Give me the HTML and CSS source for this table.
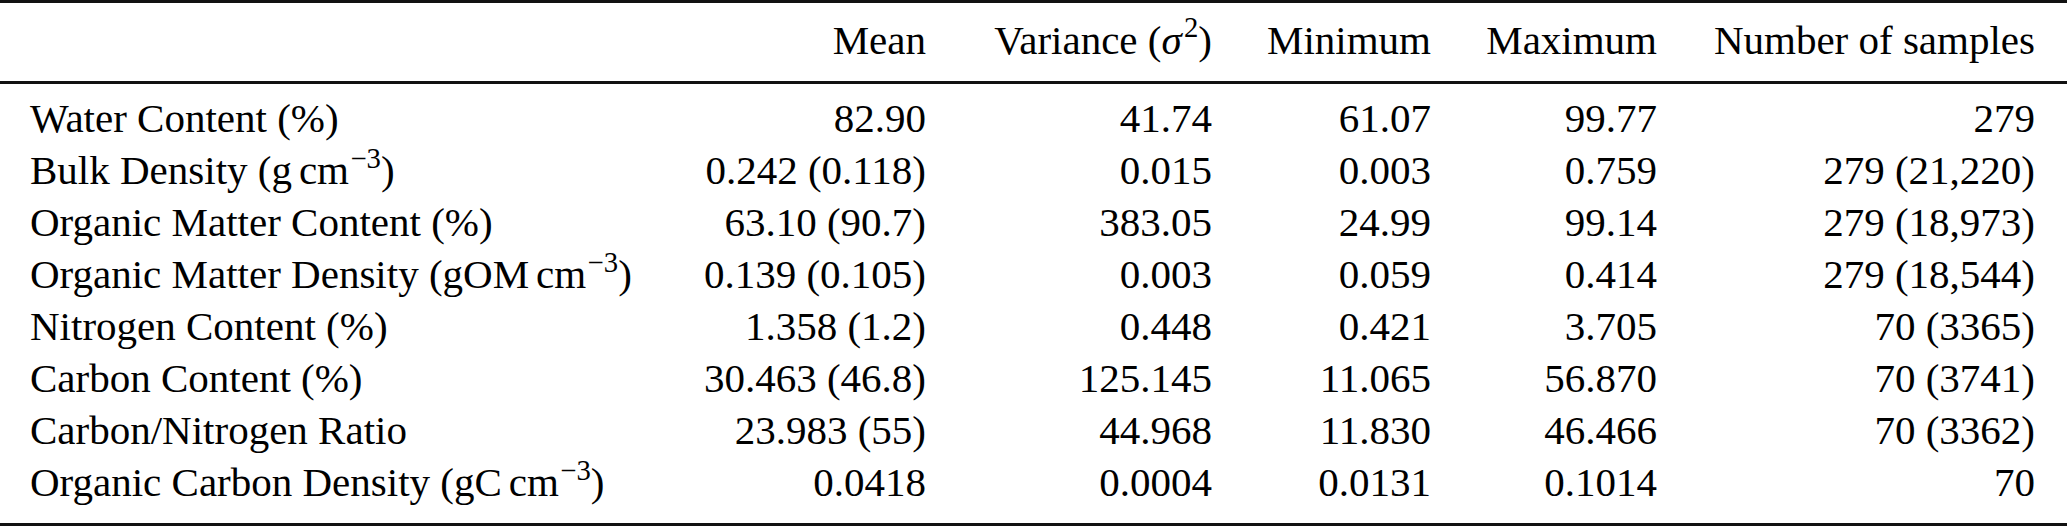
FILE: index.html
```html
<!DOCTYPE html>
<html lang="en">
<head>
<meta charset="utf-8">
<title>Sample statistics</title>
<link rel="stylesheet" href="styles.css">
</head>
<body>
<div class="tbl">
  <div class="row head">
    <div class="cell label"></div>
    <div class="cell num">Mean</div>
    <div class="cell num">Variance (<i class="sym">σ</i><sup class="sq">2</sup>)</div>
    <div class="cell num">Minimum</div>
    <div class="cell num">Maximum</div>
    <div class="cell num">Number of samples</div>
  </div>
  <div class="body">
    <div class="row">
      <div class="cell label">Water Content (%)</div>
      <div class="cell num">82.90</div>
      <div class="cell num">41.74</div>
      <div class="cell num">61.07</div>
      <div class="cell num">99.77</div>
      <div class="cell num">279</div>
    </div>
    <div class="row">
      <div class="cell label">Bulk Density (g<span class="thin"></span>cm<sup class="ex">−3</sup>)</div>
      <div class="cell num">0.242 (0.118)</div>
      <div class="cell num">0.015</div>
      <div class="cell num">0.003</div>
      <div class="cell num">0.759</div>
      <div class="cell num">279 (21,220)</div>
    </div>
    <div class="row">
      <div class="cell label">Organic Matter Content (%)</div>
      <div class="cell num">63.10 (90.7)</div>
      <div class="cell num">383.05</div>
      <div class="cell num">24.99</div>
      <div class="cell num">99.14</div>
      <div class="cell num">279 (18,973)</div>
    </div>
    <div class="row">
      <div class="cell label">Organic Matter Density (gOM<span class="thin"></span>cm<sup class="ex">−3</sup>)</div>
      <div class="cell num">0.139 (0.105)</div>
      <div class="cell num">0.003</div>
      <div class="cell num">0.059</div>
      <div class="cell num">0.414</div>
      <div class="cell num">279 (18,544)</div>
    </div>
    <div class="row">
      <div class="cell label">Nitrogen Content (%)</div>
      <div class="cell num">1.358 (1.2)</div>
      <div class="cell num">0.448</div>
      <div class="cell num">0.421</div>
      <div class="cell num">3.705</div>
      <div class="cell num">70 (3365)</div>
    </div>
    <div class="row">
      <div class="cell label">Carbon Content (%)</div>
      <div class="cell num">30.463 (46.8)</div>
      <div class="cell num">125.145</div>
      <div class="cell num">11.065</div>
      <div class="cell num">56.870</div>
      <div class="cell num">70 (3741)</div>
    </div>
    <div class="row">
      <div class="cell label">Carbon/Nitrogen Ratio</div>
      <div class="cell num">23.983 (55)</div>
      <div class="cell num">44.968</div>
      <div class="cell num">11.830</div>
      <div class="cell num">46.466</div>
      <div class="cell num">70 (3362)</div>
    </div>
    <div class="row">
      <div class="cell label">Organic Carbon Density (gC<span class="thin"></span>cm<sup class="ex">−3</sup>)</div>
      <div class="cell num">0.0418</div>
      <div class="cell num">0.0004</div>
      <div class="cell num">0.0131</div>
      <div class="cell num">0.1014</div>
      <div class="cell num">70</div>
    </div>
  </div>
</div>
</body>
</html>
```

FILE: styles.css
```css
html, body {
  margin: 0;
  padding: 0;
  background: #ffffff;
}

body {
  font-family: "Liberation Serif", "Times New Roman", serif;
  font-size: 41px;
  line-height: 52px;
  color: #000000;
}

.tbl {
  width: 2067px;
  border-top: 3px solid #111111;
  border-bottom: 3px solid #111111;
}

.row {
  display: grid;
  grid-template-columns: 660px 266px 286px 219px 226px 378px;
  padding-right: 32px;
  height: 52px;
  white-space: nowrap;
}

.head {
  padding-top: 11px;
  padding-bottom: 15px;
  border-bottom: 3px solid #111111;
}

.body {
  padding-top: 8px;
  padding-bottom: 15px;
}

.cell.label {
  padding-left: 30px;
  text-align: left;
}

.cell.num {
  text-align: right;
}

.sym {
  font-style: italic;
}

.sq {
  font-size: 0.7em;
  line-height: 0;
  vertical-align: 0.6em;
  margin-left: 0.08em;
}

.ex {
  font-size: 0.7em;
  line-height: 0;
  vertical-align: 0.55em;
  margin-left: 0.05em;
}

.thin {
  display: inline-block;
  width: 0.17em;
}
```
